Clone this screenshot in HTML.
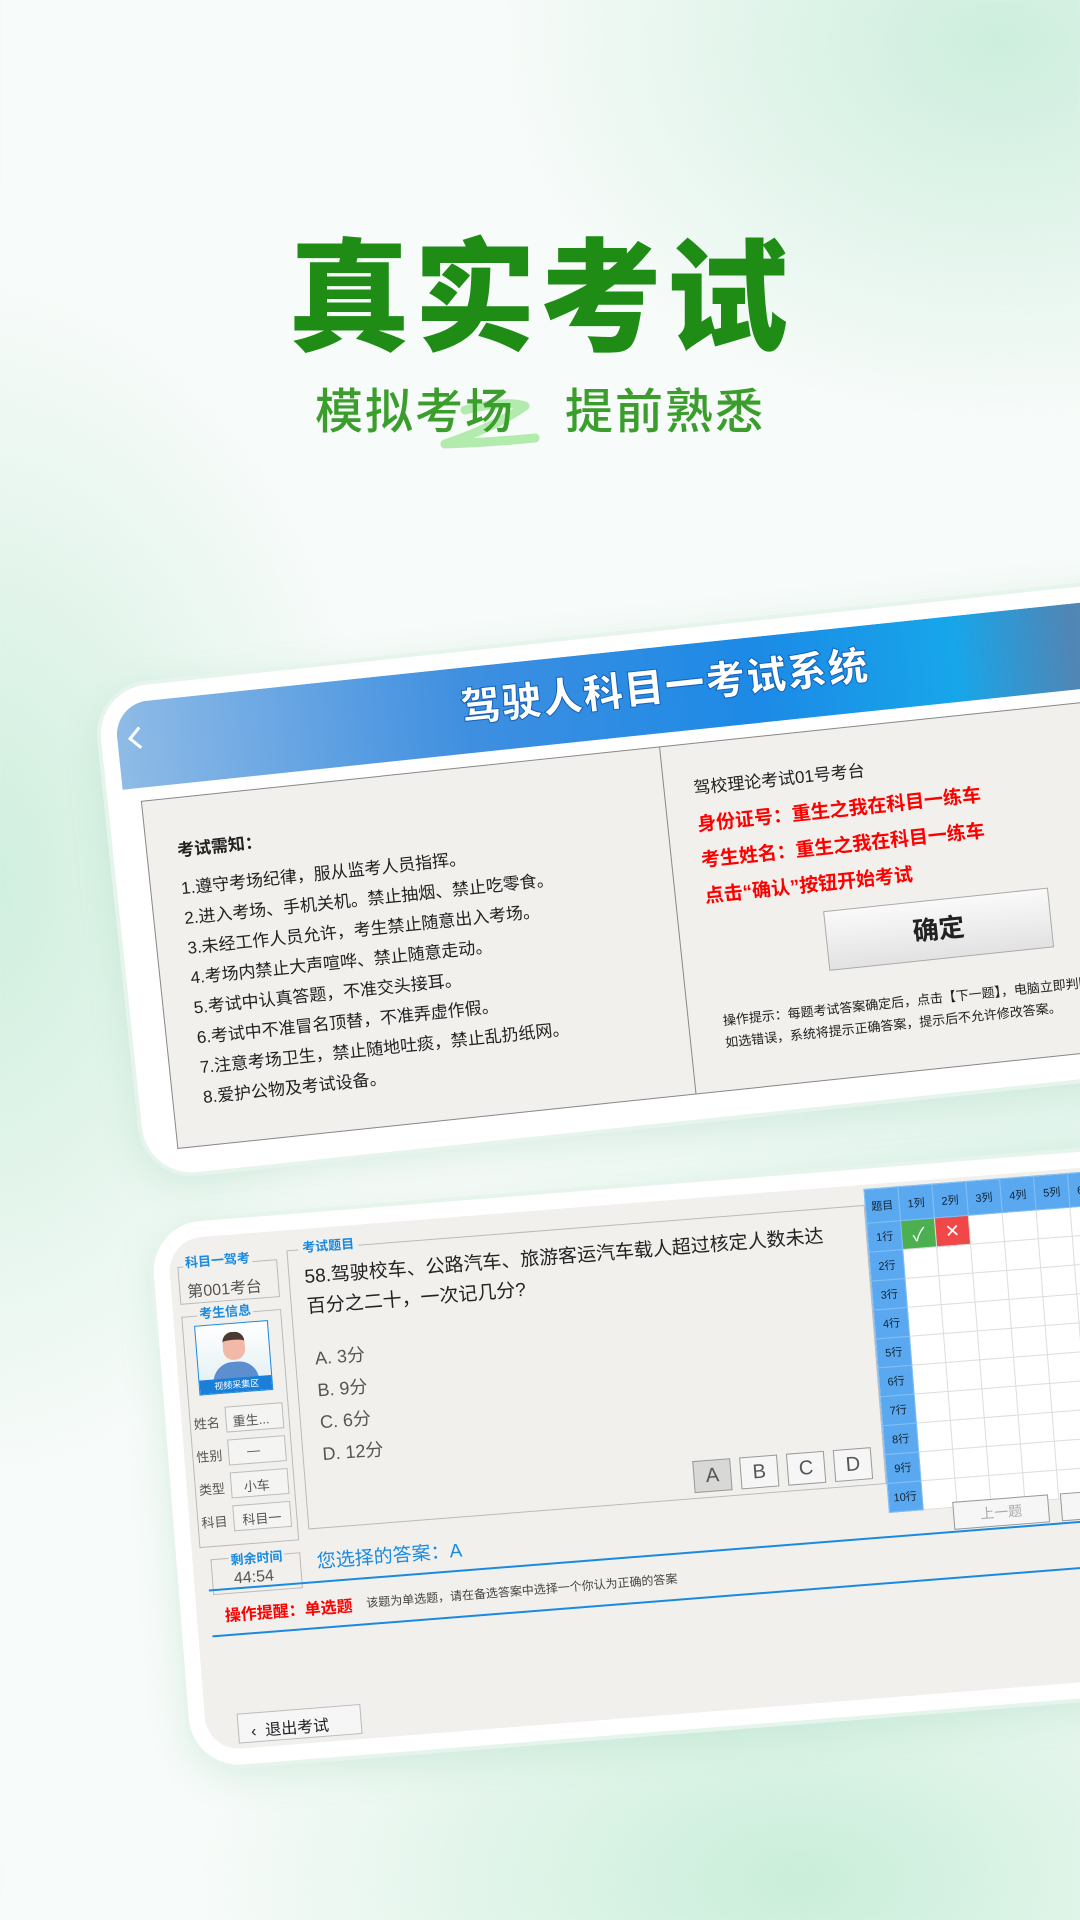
<!DOCTYPE html>
<html><head><meta charset="utf-8"><style>
*{margin:0;padding:0;box-sizing:border-box}
body{width:1080px;height:1920px;overflow:hidden;position:relative;font-family:"Liberation Sans","Noto Sans CJK SC",sans-serif;
background:radial-gradient(ellipse 500px 380px at 1000px 40px,#cdeedd 0%,rgba(220,245,232,0) 100%),
radial-gradient(ellipse 420px 600px at -40px 880px,#cdeedc 0%,rgba(220,245,232,0) 100%),
radial-gradient(ellipse 600px 350px at 800px 1880px,#c9eed9 0%,rgba(220,245,232,0) 100%),
radial-gradient(ellipse 600px 300px at 1080px 1180px,#dff4ea 0%,rgba(220,245,232,0) 100%),#f7fbf9}
.title{position:absolute;left:0;width:1080px;top:200px;text-align:center;font-size:122px;font-weight:900;color:#1f8c16;letter-spacing:4px;font-family:"Noto Sans CJK SC",sans-serif}
.sub{position:absolute;left:0;width:1080px;top:372px;text-align:center;font-size:48px;font-weight:500;color:#3a9d2c;letter-spacing:2px;font-family:"Noto Sans CJK SC",sans-serif}
.sub span{display:inline-block;width:50px}
.sq{position:absolute;left:425px;top:392px}
.tab{position:absolute;background:#fff;border-radius:50px;padding:16px;box-shadow:0 0 0 4px #e6f5ec,0 10px 40px rgba(80,170,120,.18);transform-origin:0 0}
.scr{position:relative;width:100%;height:100%;border-radius:34px 0 0 34px;overflow:hidden}
.t1{left:96px;top:690px;width:1200px;height:490px;transform:rotate(-6deg)}
.t1 .scr{background:#fff}
.hdr{position:absolute;left:0;top:0;right:0;height:86px;background:linear-gradient(90deg,#8fbbe6 0%,#3f8fe0 30%,#1c8ae6 55%,#17a6ea 72%,#4f86b6 82%,#7c9cb8 100%)}
.hdr h1{position:absolute;left:300px;top:8px;width:500px;text-align:center;font-size:40px;color:#fff;font-weight:900;font-family:"Noto Sans CJK SC",sans-serif;-webkit-text-stroke:1px #1462b8;letter-spacing:1px}
.back{position:absolute;left:14px;top:28px;width:16px;height:16px;border-left:3px solid #fff;border-bottom:3px solid #fff;transform:rotate(45deg)}
.pan{position:absolute;left:17px;top:99px;width:1200px;height:350px;background:#f1f0ed;border:1px solid #888}
.div{position:absolute;left:520px;top:0;bottom:0;border-left:1px solid #888}
.p{position:absolute;font-size:17px;color:#222;white-space:nowrap}
.red{color:#f00;font-size:19px;font-weight:700}
.btn{position:absolute;left:666px;top:180px;width:226px;height:60px;border:1px solid #aaa;background:linear-gradient(#fafafa,#e2e2e2);font-size:26px;font-weight:700;text-align:center;line-height:58px;color:#222}
.t2{left:150px;top:1225px;width:1180px;height:545px;transform:rotate(-4.5deg)}
.t2 .scr{background:#f1f0ed}
.b{position:absolute;border:1px solid #bbb}
.bl{color:#1a8ae0;font-weight:700}
.grid{position:absolute;left:698px;top:4px;border-collapse:collapse;font-size:11px}
.grid td{width:34px;height:29px;border:1px solid #ddd;background:#fff;text-align:center}
.grid tr:first-child td{height:34px;background:#5aa8ef;color:#123;border-color:#7fbff5}
.grid td:first-child{background:#5aa8ef;color:#123;border-color:#7fbff5}
.ob{position:absolute;width:38px;height:32px;border:1px solid #999;background:#f6f6f6;text-align:center;line-height:30px;font-size:20px;color:#555}
</style></head><body>
<div class="title">真实考试</div>
<svg class="sq" width="120" height="70" viewBox="0 0 120 70"><path d="M40 18 Q80 8 100 14 Q70 35 20 52 Q70 50 110 46" fill="none" stroke="#a6e8a0" stroke-width="9" stroke-linecap="round" stroke-linejoin="round" opacity=".85"/></svg>
<div class="sub">模拟考场<span></span>提前熟悉</div>

<div class="tab t1"><div class="scr">
 <div class="hdr"><div class="back"></div><h1>驾驶人科目一考试系统</h1></div>
 <div class="pan">
  <div class="div"></div>
  <div class="p" style="left:30px;top:38px;font-weight:700">考试需知：</div>
  <div class="p" style="left:30px;top:76px">1.遵守考场纪律，服从监考人员指挥。</div>
  <div class="p" style="left:30px;top:106px">2.进入考场、手机关机。禁止抽烟、禁止吃零食。</div>
  <div class="p" style="left:30px;top:136px">3.未经工作人员允许，考生禁止随意出入考场。</div>
  <div class="p" style="left:30px;top:166px">4.考场内禁止大声喧哗、禁止随意走动。</div>
  <div class="p" style="left:30px;top:196px">5.考试中认真答题，不准交头接耳。</div>
  <div class="p" style="left:30px;top:226px">6.考试中不准冒名顶替，不准弄虚作假。</div>
  <div class="p" style="left:30px;top:256px">7.注意考场卫生，禁止随地吐痰，禁止乱扔纸网。</div>
  <div class="p" style="left:30px;top:286px">8.爱护公物及考试设备。</div>
  <div class="p" style="left:550px;top:30px">驾校理论考试01号考台</div>
  <div class="p red" style="left:550px;top:66px">身份证号：重生之我在科目一练车</div>
  <div class="p red" style="left:550px;top:102px">考生姓名：重生之我在科目一练车</div>
  <div class="p red" style="left:550px;top:138px">点击“确认”按钮开始考试</div>
  <div class="btn">确定</div>
  <div class="p" style="left:555px;top:268px;font-size:13px">操作提示：每题考试答案确定后，点击【下一题】，电脑立即判断正误，</div>
  <div class="p" style="left:555px;top:290px;font-size:13px">如选错误，系统将提示正确答案，提示后不允许修改答案。</div>
 </div>
</div></div>

<div class="tab t2"><div class="scr">
 <div class="b" style="left:8px;top:28px;width:100px;height:38px"></div>
 <div class="p bl" style="left:14px;top:14px;font-size:13px;background:#f1f0ed;padding:0 2px">科目一驾考</div>
 <div class="p" style="left:16px;top:40px;font-size:16px;color:#555">第001考台</div>
 <div class="b" style="left:8px;top:78px;width:100px;height:232px"></div>
 <div class="p bl" style="left:24px;top:66px;font-size:13px;background:#f1f0ed;padding:0 2px">考生信息</div>
 <div style="position:absolute;left:20px;top:88px;width:74px;height:70px;background:linear-gradient(#fff,#dfeef2);border:1px solid #1a8ae0;overflow:hidden">
  <div style="position:absolute;left:26px;top:8px;width:22px;height:28px;border-radius:10px;background:#f2b8a8;border-top:8px solid #4a3a33"></div>
  <div style="position:absolute;left:14px;top:38px;width:46px;height:30px;border-radius:20px 20px 0 0;background:#5d8fd0"></div>
  <div style="position:absolute;left:0;bottom:0;width:74px;height:14px;background:#1a7fd8;color:#fff;font-size:9px;text-align:center;line-height:14px">视频采集区</div>
 </div>
 <div class="p" style="left:12px;top:176px;font-size:13px;color:#555">姓名</div><div class="b p" style="left:44px;top:171px;width:58px;height:26px;font-size:13px;color:#555;padding:4px 6px;background:#f4f4f2">重生...</div>
 <div class="p" style="left:12px;top:209px;font-size:13px;color:#555">性别</div><div class="b p" style="left:44px;top:204px;width:58px;height:26px;font-size:13px;color:#555;padding:4px 18px;background:#f4f4f2">—</div>
 <div class="p" style="left:12px;top:242px;font-size:13px;color:#555">类型</div><div class="b p" style="left:44px;top:237px;width:58px;height:26px;font-size:13px;color:#555;padding:4px 12px;background:#f4f4f2">小车</div>
 <div class="p" style="left:12px;top:275px;font-size:13px;color:#555">科目</div><div class="b p" style="left:44px;top:270px;width:58px;height:26px;font-size:13px;color:#555;padding:4px 8px;background:#f4f4f2">科目一</div>
 <div class="b" style="left:18px;top:322px;width:90px;height:36px"></div>
 <div class="p bl" style="left:36px;top:314px;font-size:13px;background:#f1f0ed;padding:0 2px">剩余时间</div>
 <div class="p" style="left:40px;top:335px;font-size:16px;color:#555">44:54</div>

 <div class="b" style="left:118px;top:20px;width:580px;height:280px"></div>
 <div class="p bl" style="left:130px;top:8px;font-size:13px;background:#f1f0ed;padding:0 4px">考试题目</div>
 <div class="p" style="left:134px;top:34px;font-size:19px;color:#222;line-height:30px">58.驾驶校车、公路汽车、旅游客运汽车载人超过核定人数未达<br>百分之二十，一次记几分?</div>
 <div class="p" style="left:138px;top:116px;font-size:18px;color:#555">A. 3分</div>
 <div class="p" style="left:138px;top:148px;font-size:18px;color:#555">B. 9分</div>
 <div class="p" style="left:138px;top:180px;font-size:18px;color:#555">C. 6分</div>
 <div class="p" style="left:138px;top:212px;font-size:18px;color:#555">D. 12分</div>
 <div class="ob" style="left:506px;top:262px;background:#d8d8d6">A</div>
 <div class="ob" style="left:553px;top:262px">B</div>
 <div class="ob" style="left:600px;top:262px">C</div>
 <div class="ob" style="left:647px;top:262px">D</div>
 <table class="grid">
  <tr><td>题目</td><td>1列</td><td>2列</td><td>3列</td><td>4列</td><td>5列</td><td>6列</td><td>7列</td><td>8列</td><td>9列</td><td>10列</td></tr>
  <tr><td>1行</td><td style="background:#4caf50;color:#fff;font-size:18px">✓</td><td style="background:#f04848;color:#fff;font-size:18px">✕</td><td></td><td></td><td></td><td></td><td></td><td></td><td></td><td></td></tr>
  <tr><td>2行</td><td></td><td></td><td></td><td></td><td></td><td></td><td></td><td></td><td></td><td></td></tr>
  <tr><td>3行</td><td></td><td></td><td></td><td></td><td></td><td></td><td></td><td></td><td></td><td></td></tr>
  <tr><td>4行</td><td></td><td></td><td></td><td></td><td></td><td></td><td></td><td></td><td></td><td></td></tr>
  <tr><td>5行</td><td></td><td></td><td></td><td></td><td></td><td></td><td></td><td></td><td></td><td></td></tr>
  <tr><td>6行</td><td></td><td></td><td></td><td></td><td></td><td></td><td></td><td></td><td></td><td></td></tr>
  <tr><td>7行</td><td></td><td></td><td></td><td></td><td></td><td></td><td></td><td></td><td></td><td></td></tr>
  <tr><td>8行</td><td></td><td></td><td></td><td></td><td></td><td></td><td></td><td></td><td></td><td></td></tr>
  <tr><td>9行</td><td></td><td></td><td></td><td></td><td></td><td></td><td></td><td></td><td></td><td></td></tr>
  <tr><td>10行</td><td></td><td></td><td></td><td></td><td></td><td></td><td></td><td></td><td></td><td></td></tr>
 </table>
 <div class="p bl" style="left:124px;top:318px;font-size:19px;font-weight:400">您选择的答案：A</div>
 <div class="ob" style="left:762px;top:323px;width:96px;height:28px;font-size:14px;line-height:26px;color:#aaa">上一题</div>
 <div class="ob" style="left:870px;top:323px;width:96px;height:28px;font-size:14px;line-height:26px;color:#333">下一题</div>
 <div style="position:absolute;left:14px;top:352px;width:1200px;border-top:2px solid #1a8ae0"></div>
 <div class="p" style="left:28px;top:366px;font-size:16px;color:#f00;font-weight:700">操作提醒：单选题</div>
 <div class="p" style="left:170px;top:369px;font-size:12px;color:#444">该题为单选题，请在备选答案中选择一个你认为正确的答案</div>
 <div style="position:absolute;left:14px;top:398px;width:1200px;border-top:2px solid #1a8ae0"></div>
 <div class="b p" style="left:32px;top:478px;width:124px;height:30px;font-size:16px;color:#222;padding:4px 12px;background:#f6f6f6">‹&nbsp; 退出考试</div>
</div></div>
</body></html>
